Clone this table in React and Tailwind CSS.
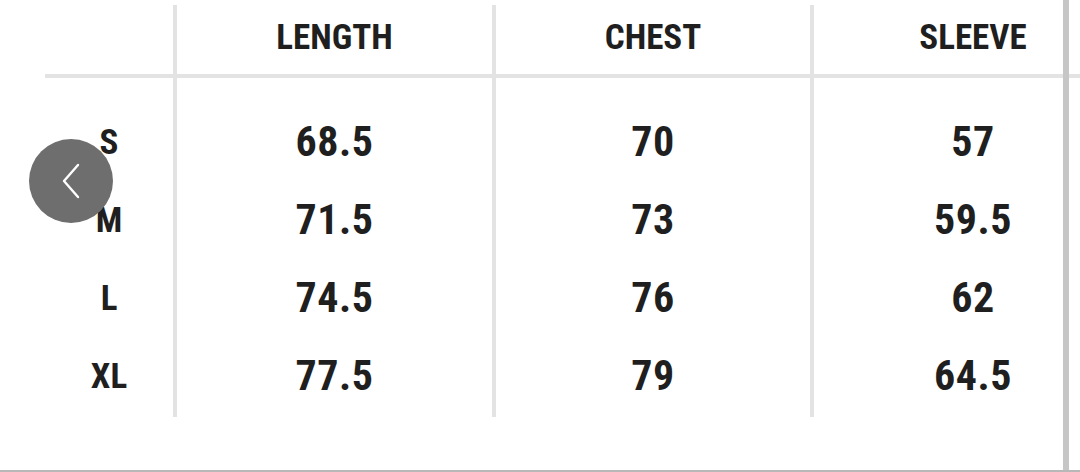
const sizes = [
  { size: 'S', length: '68.5', chest: '70', sleeve: '57' },
  { size: 'M', length: '71.5', chest: '73', sleeve: '59.5' },
  { size: 'L', length: '74.5', chest: '76', sleeve: '62' },
  { size: 'XL', length: '77.5', chest: '79', sleeve: '64.5' },
];

const font = { fontFamily: 'Roboto, "DejaVu Sans Condensed", sans-serif' };

const App = () => {
  return (
    <div
      className="relative w-[1080px] h-[472px] overflow-hidden bg-white border-b-2 border-[#b8b8b8] text-[#1f1f1f] font-bold font-stretch-condensed"
      style={font}
    >
      {/* Header */}
      <div className="flex ml-[45px] mt-[5px] w-[1200px] h-[73px] border-b-4 border-[#e3e3e3]">
        <div className="w-[128px] shrink-0" />
        <div className="w-[319px] shrink-0 border-l-4 border-[#e3e3e3] flex items-center justify-center pb-[5px] text-[35px] leading-none">
          LENGTH
        </div>
        <div className="w-[318px] shrink-0 border-l-4 border-[#e3e3e3] flex items-center justify-center pb-[5px] text-[35px] leading-none">
          CHEST
        </div>
        <div className="w-[322px] shrink-0 border-l-4 border-[#e3e3e3] flex items-center justify-center pb-[5px] text-[35px] leading-none">
          SLEEVE
        </div>
      </div>

      {/* Body */}
      <div className="flex ml-[45px] w-[1200px] h-[339px]">
        <div className="w-[128px] shrink-0 flex flex-col pt-[25px]">
          {sizes.map((row) => (
            <div key={row.size} className="h-[78px] flex items-center justify-center text-[35px] leading-none">
              {row.size}
            </div>
          ))}
        </div>
        <div className="w-[319px] shrink-0 border-l-4 border-[#e3e3e3] flex flex-col pt-[25px]">
          {sizes.map((row) => (
            <div key={row.size} className="h-[78px] flex items-center justify-center text-[42px] leading-none tracking-[0.5px]">
              {row.length}
            </div>
          ))}
        </div>
        <div className="w-[318px] shrink-0 border-l-4 border-[#e3e3e3] flex flex-col pt-[25px]">
          {sizes.map((row) => (
            <div key={row.size} className="h-[78px] flex items-center justify-center text-[42px] leading-none tracking-[0.5px]">
              {row.chest}
            </div>
          ))}
        </div>
        <div className="w-[322px] shrink-0 border-l-4 border-[#e3e3e3] flex flex-col pt-[25px]">
          {sizes.map((row) => (
            <div key={row.size} className="h-[78px] flex items-center justify-center text-[42px] leading-none tracking-[0.5px]">
              {row.sleeve}
            </div>
          ))}
        </div>
      </div>

      {/* Scrollbar edge */}
      <div className="absolute top-0 bottom-0 left-[1063px] w-[6px] bg-[#c6c6c6]" />

      {/* Prev button */}
      <button className="absolute left-[29px] top-[139px] w-[84px] h-[84px] rounded-full bg-[#6e6e6e] flex items-center justify-center">
        <svg width="20" height="36" viewBox="0 0 20 36" fill="none">
          <path d="M17 2 L3 18 L17 34" stroke="white" strokeWidth="2.4" strokeLinecap="round" strokeLinejoin="round" />
        </svg>
      </button>
    </div>
  );
};

export default App;
